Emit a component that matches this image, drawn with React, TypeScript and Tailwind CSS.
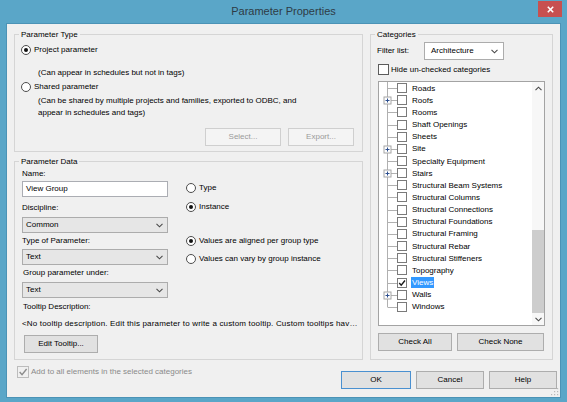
import React from "react";

function Chevron({ className = "" }: { className?: string }) {
  return (
    <svg width="7" height="5" viewBox="0 0 7 5" className={className}>
      <polyline points="0.5,0.8 3.5,3.8 6.5,0.8" fill="none" stroke="#4a4a4a" strokeWidth="1.1" />
    </svg>
  );
}

function Radio({ checked, label, className = "" }: { checked?: boolean; label: string; className?: string }) {
  return (
    <div className={`flex items-center h-[12px] ${className}`}>
      <span className="w-[10px] h-[10px] rounded-full border border-[#4d4d4d] bg-white flex items-center justify-center shrink-0">
        {checked && <span className="w-[4px] h-[4px] rounded-full bg-[#111]" />}
      </span>
      <span className="ml-[3px] whitespace-nowrap">{label}</span>
    </div>
  );
}

function Check({ checked, size = 10, color = "#7a7a7a", mark = "#1a1a1a", bg = "#ffffff" }: { checked?: boolean; size?: number; color?: string; mark?: string; bg?: string }) {
  return (
    <svg width={size} height={size} viewBox={`0 0 ${size} ${size}`} className="shrink-0">
      <rect x="0.5" y="0.5" width={size - 1} height={size - 1} fill={bg} stroke={color} />
      {checked && (
        <polyline
          points={`${size * 0.22},${size * 0.5} ${size * 0.42},${size * 0.72} ${size * 0.8},${size * 0.25}`}
          fill="none"
          stroke={mark}
          strokeWidth="1.4"
        />
      )}
    </svg>
  );
}

function Group({ title, className = "", children }: { title: string; className?: string; children?: React.ReactNode }) {
  return (
    <div className={`border border-[#d5d5d5] flex flex-col ${className}`}>
      <div className="-mt-[5px] ml-[4px] px-[2px] w-fit bg-[#f0f0f0] leading-[10px] h-[10px] whitespace-nowrap">{title}</div>
      {children}
    </div>
  );
}

function GraySelect({ value, className = "" }: { value: string; className?: string }) {
  return (
    <div className={`w-[146px] h-[16px] border border-[#acacac] bg-[#e6e6e6] flex items-center justify-between pl-[3px] pr-[4px] ${className}`}>
      <span>{value}</span>
      <Chevron />
    </div>
  );
}

function Btn({ label, className = "", disabled }: { label: string; className?: string; disabled?: boolean }) {
  return (
    <div
      className={`h-[18px] flex items-center justify-center border ${
        disabled ? "border-[#cfcfcf] bg-[#f4f4f4] text-[#9a9a9a]" : "border-[#adadad] bg-[#e1e1e1] text-black"
      } ${className}`}
    >
      {label}
    </div>
  );
}

const cats: { name: string; plus?: boolean; checked?: boolean; sel?: boolean }[] = [
  { name: "Roads" },
  { name: "Roofs", plus: true },
  { name: "Rooms" },
  { name: "Shaft Openings" },
  { name: "Sheets" },
  { name: "Site", plus: true },
  { name: "Specialty Equipment" },
  { name: "Stairs", plus: true },
  { name: "Structural Beam Systems" },
  { name: "Structural Columns" },
  { name: "Structural Connections" },
  { name: "Structural Foundations" },
  { name: "Structural Framing" },
  { name: "Structural Rebar" },
  { name: "Structural Stiffeners" },
  { name: "Topography" },
  { name: "Views", checked: true, sel: true },
  { name: "Walls", plus: true },
  { name: "Windows" },
];

function TreeGutter({ plus, last }: { plus?: boolean; last?: boolean }) {
  return (
    <svg width="18" height="12" viewBox="0 0 18 12" className="shrink-0 overflow-visible">
      <line x1="8.5" y1="-1" x2="8.5" y2={last ? 6 : 13} stroke="#b0b0b0" strokeWidth="1" />
      <line x1={plus ? 12 : 8.5} y1="6.5" x2="18" y2="6.5" stroke="#b0b0b0" strokeWidth="1" />
      {plus && (
        <g>
          <rect x="5" y="3" width="7" height="7" fill="#fff" stroke="#a6a6a6" />
          <line x1="6.5" y1="6.5" x2="10.5" y2="6.5" stroke="#2d4f8f" />
          <line x1="8.5" y1="4.5" x2="8.5" y2="8.5" stroke="#2d4f8f" />
        </g>
      )}
    </svg>
  );
}

export default function App() {
  return (
    <div className="w-[567px] h-[402px] bg-[#5aa6c8] flex flex-col font-['Liberation_Sans',Arial,sans-serif] text-[8px] leading-[12px] text-black overflow-hidden">
      {/* Title bar */}
      <div className="h-[23px] flex items-start shrink-0">
        <div className="w-[29px] shrink-0" />
        <div className="flex-1 text-center text-[11px] leading-[23px] text-[#2e3b45]">Parameter Properties</div>
        <div className="w-[24px] h-[16px] mt-[1px] mr-[5px] bg-[#c75050] flex items-center justify-center shrink-0">
          <svg width="7" height="7" viewBox="0 0 7 7">
            <line x1="0.8" y1="0.8" x2="6.2" y2="6.2" stroke="#fff" strokeWidth="1.6" />
            <line x1="6.2" y1="0.8" x2="0.8" y2="6.2" stroke="#fff" strokeWidth="1.6" />
          </svg>
        </div>
      </div>

      {/* Client */}
      <div className="relative mx-[6px] mb-[4px] flex-1 bg-[#f0f0f0] border border-[#4b93b6] flex flex-col">
        <div className="flex pl-[7px] pt-[10px] gap-[7px]">
          {/* Left column */}
          <div className="w-[349px] flex flex-col">
            <Group title="Parameter Type" className="h-[118px]">
              <div className="pl-[6px] flex flex-col">
                <Radio checked label="Project parameter" className="mt-[4px]" />
                <div className="mt-[11px] ml-[17px]">(Can appear in schedules but not in tags)</div>
                <Radio label="Shared parameter" className="mt-[2px]" />
                <div className="mt-[2px] ml-[17px]">
                  (Can be shared by multiple projects and families, exported to ODBC, and
                  <br />
                  appear in schedules and tags)
                </div>
              </div>
              <div className="mt-[9px] flex justify-end gap-[7px] pr-[8px]">
                <Btn label="Select..." disabled className="w-[76px]" />
                <Btn label="Export..." disabled className="w-[66px]" />
              </div>
            </Group>

            <Group title="Parameter Data" className="h-[199px] mt-[9px]">
              <div className="flex pl-[7px]">
                <div className="w-[146px] flex flex-col">
                  <div className="mt-[1px]">Name:</div>
                  <div className="mt-[1px] h-[16px] w-[146px] border border-[#abadb3] bg-white flex items-center pl-[3px]">View Group</div>
                  <div className="mt-[5px]">Discipline:</div>
                  <GraySelect value="Common" className="mt-[3px]" />
                  <div className="mt-[2px]">Type of Parameter:</div>
                  <GraySelect value="Text" className="mt-[2px]" />
                  <div className="mt-[2px] ml-[1px]">Group parameter under:</div>
                  <GraySelect value="Text" className="mt-[3px]" />
                </div>
                <div className="ml-[18px] flex flex-col">
                  <Radio label="Type" className="mt-[15px]" />
                  <Radio checked label="Instance" className="mt-[7px]" />
                  <Radio checked label="Values are aligned per group type" className="mt-[22px]" />
                  <Radio label="Values can vary by group instance" className="mt-[6px]" />
                </div>
              </div>
              <div className="pl-[8px] mt-[3px]">Tooltip Description:</div>
              <div className="pl-[7px] mt-[5px] whitespace-nowrap tracking-[0.17px]">
                &lt;No tooltip description. Edit this parameter to write a custom tooltip. Custom tooltips hav…
              </div>
              <div className="pl-[9px] mt-[5px]">
                <Btn label="Edit Tooltip..." className="w-[74px] h-[17px]" />
              </div>
            </Group>
          </div>

          {/* Right column */}
          <Group title="Categories" className="w-[183px] h-[326px]">
            <div className="mt-[2px] pl-[6px] flex items-center">
              <div className="w-[47px]">Filter list:</div>
              <div className="w-[80px] h-[18px] border border-[#acacac] bg-white flex items-center justify-between pl-[6px] pr-[5px]">
                <span>Architecture</span>
                <Chevron />
              </div>
            </div>
            <div className="mt-[4px] pl-[7px] flex items-center h-[11px]">
              <Check size={11} color="#5c5c5c" />
              <span className="ml-[2px]">Hide un-checked categories</span>
            </div>
            <div className="ml-[7px] mt-[6px] w-[167px] h-[245px] border border-[#a3a3a3] bg-white flex">
              <div className="flex-1 overflow-hidden flex flex-col">
                {cats.map((c, i) => (
                  <div key={c.name} className="flex items-center h-[12.17px] shrink-0 whitespace-nowrap">
                    <TreeGutter plus={c.plus} last={i === cats.length - 1} />
                    <Check checked={c.checked} size={10} />
                    <span
                      className={`ml-[4px] px-[1px] leading-[11px] ${c.sel ? "bg-[#3399ff] text-white" : ""}`}
                    >
                      {c.name}
                    </span>
                  </div>
                ))}
              </div>
              <div className="w-[12px] flex flex-col bg-[#f7f7f7]">
                <div className="h-[13px] flex items-center justify-center">
                  <Chevron className="rotate-180" />
                </div>
                <div className="flex-1" />
                <div className="h-[83px] bg-[#cdcdcd]" />
                <div className="h-[12px] flex items-center justify-center">
                  <Chevron />
                </div>
              </div>
            </div>
            <div className="mt-[7px] pl-[7px] flex gap-[5px]">
              <Btn label="Check All" className="w-[74px]" />
              <Btn label="Check None" className="w-[87px]" />
            </div>
          </Group>
        </div>

        {/* Bottom row */}
        <div className="flex justify-between items-start pl-[10px] pr-[3px]">
          <div className="mt-[6px] flex items-center h-[12px] text-[#8a8a8a]">
            <Check checked size={12} color="#bcbcbc" mark="#8c8c8c" bg="#f0f0f0" />
            <span className="ml-[2px]">Add to all elements in the selected categories</span>
          </div>
          <div className="mt-[11px] flex gap-[5px]">
            <Btn label="OK" className="w-[70px] !border-[#4a90d0]" />
            <Btn label="Cancel" className="w-[68px]" />
            <Btn label="Help" className="w-[68px]" />
          </div>
        </div>

        {/* resize grip */}
        <svg width="8" height="8" viewBox="0 0 8 8" className="absolute right-[1px] bottom-[1px]">
          <rect x="6" y="0" width="1.2" height="1.2" fill="#b8b8b8" />
          <rect x="3" y="3" width="1.2" height="1.2" fill="#b8b8b8" />
          <rect x="6" y="3" width="1.2" height="1.2" fill="#b8b8b8" />
          <rect x="0" y="6" width="1.2" height="1.2" fill="#b8b8b8" />
          <rect x="3" y="6" width="1.2" height="1.2" fill="#b8b8b8" />
          <rect x="6" y="6" width="1.2" height="1.2" fill="#b8b8b8" />
        </svg>
      </div>
    </div>
  );
}
